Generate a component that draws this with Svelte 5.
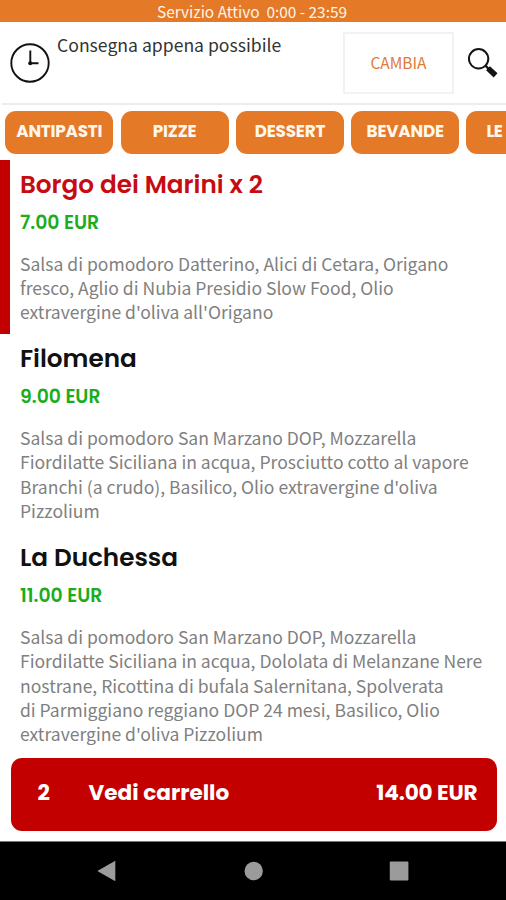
<script lang="ts">
	// Restaurant menu screen: category tabs, dish list and cart bar

	interface Dish {
		name: string;
		price: string;
		quantity: number;
		lines: string[];
	}

	const categories = ['ANTIPASTI', 'PIZZE', 'DESSERT', 'BEVANDE', 'LE'];

	const dishes: Dish[] = [
		{
			name: 'Borgo dei Marini',
			price: '7.00 EUR',
			quantity: 2,
			lines: [
				'Salsa di pomodoro Datterino, Alici di Cetara, Origano',
				'fresco, Aglio di Nubia Presidio Slow Food, Olio',
				"extravergine d'oliva all'Origano"
			]
		},
		{
			name: 'Filomena',
			price: '9.00 EUR',
			quantity: 0,
			lines: [
				'Salsa di pomodoro San Marzano DOP, Mozzarella',
				'Fiordilatte Siciliana in acqua, Prosciutto cotto al vapore',
				"Branchi (a crudo), Basilico, Olio extravergine d'oliva",
				'Pizzolium'
			]
		},
		{
			name: 'La Duchessa',
			price: '11.00 EUR',
			quantity: 0,
			lines: [
				'Salsa di pomodoro San Marzano DOP, Mozzarella',
				'Fiordilatte Siciliana in acqua, Dololata di Melanzane Nere',
				'nostrane, Ricottina di bufala Salernitana, Spolverata',
				'di Parmiggiano reggiano DOP 24 mesi, Basilico, Olio',
				"extravergine d'oliva Pizzolium"
			]
		}
	];
</script>

<div class="screen">
	<div class="service">Servizio Attivo&nbsp; 0:00 - 23:59</div>

	<header class="delivery">
		<svg class="clock" viewBox="0 0 40 40" fill="none" stroke="#111">
			<circle cx="20" cy="20" r="18.7" stroke-width="1.9" />
			<path d="M20.3 7.5v12.8M20 20.3h8.5" stroke-width="1.9" />
			<circle cx="20.2" cy="20.3" r="2" fill="#111" stroke="none" />
		</svg>
		<span class="when">Consegna appena possibile</span>
		<button class="change">CAMBIA</button>
		<svg class="search" viewBox="0 0 30 30" fill="none" stroke="#151515">
			<circle cx="10.6" cy="10.8" r="9.7" stroke-width="2" />
			<path d="M17.4 17.6l4 4" stroke-width="2.2" />
			<path d="M20 20.2l7.6 7.2" stroke-width="5.6" />
		</svg>
	</header>

	<nav class="tabs">
		{#each categories as category, index}
			<button class="tab" class:tab-partial={index === categories.length - 1}>{category}</button>
		{/each}
	</nav>

	<main class="menu">
		{#each dishes as dish}
			<article class="dish" class:selected={dish.quantity > 0}>
				<h2>{dish.name}{dish.quantity > 0 ? ` x ${dish.quantity}` : ''}</h2>
				<div class="price">{dish.price}</div>
				<div class="description">
					{#each dish.lines as line}
						<div>{line}</div>
					{/each}
				</div>
			</article>
		{/each}
	</main>

	<button class="cart">
		<span class="count">2</span>
		<span>Vedi carrello</span>
		<span class="total">14.00 EUR</span>
	</button>

	<footer class="system">
		<svg viewBox="0 0 20 22"><path d="M.3 11L18.3 .8v20.4z" fill="#9b9b9b" /></svg>
		<svg viewBox="0 0 20 22"><circle cx="10.7" cy="11" r="9.2" fill="#9b9b9b" /></svg>
		<svg viewBox="0 0 20 22"><rect x=".8" y="1.6" width="18.6" height="18.8" rx="1" fill="#9b9b9b" /></svg>
	</footer>
</div>

<style>
	:global(body) {
		margin: 0;
		background: #fff;
	}

	.screen {
		display: flex;
		flex-direction: column;
		width: 506px;
		height: 900px;
		overflow: hidden;
		background: #fff;
		font-family: 'Noto Sans CJK SC', 'Noto Sans', sans-serif;
	}

	button {
		border: 0;
		padding: 0;
		margin: 0;
		font-family: inherit;
	}

	.service {
		flex: none;
		height: 22px;
		line-height: 22px;
		padding-right: 2px;
		background: #e47927;
		color: #fff4e6;
		font-size: 15.4px;
		text-align: center;
		white-space: nowrap;
	}

	/* Delivery row */
	.delivery {
		flex: none;
		box-sizing: border-box;
		height: 83px;
		margin-left: 2px;
		padding: 10px 9px 0 8px;
		display: flex;
		align-items: flex-start;
		border-bottom: 2px solid #ececee;
	}

	.clock {
		width: 40px;
		height: 40px;
		margin-top: 11px;
	}

	.when {
		flex: 1;
		margin-left: 7px;
		line-height: 25px;
		font-size: 17.6px;
		color: #333;
		white-space: nowrap;
	}

	.change {
		box-sizing: border-box;
		width: 111px;
		height: 62px;
		padding-bottom: 2px;
		border: 2px solid #f2f2f2;
		background: #fff;
		color: #e07a38;
		font-size: 15.5px;
	}

	.search {
		width: 30px;
		height: 30px;
		margin: 16px -1px 0 14px;
	}

	/* Category tabs */
	.tabs {
		flex: none;
		display: flex;
		gap: 7.3px;
		height: 43px;
		padding: 6px 0 6px 5.3px;
		overflow: hidden;
	}

	.tab {
		flex: none;
		box-sizing: border-box;
		width: 108px;
		height: 43px;
		padding-bottom: 4px;
		border-radius: 11px;
		background: #e47927;
		color: #fff6ec;
		font-family: Poppins, Inter, sans-serif;
		font-weight: 700;
		font-size: 16.8px;
		letter-spacing: -0.2px;
		white-space: nowrap;
	}

	.tab-partial {
		padding-left: 20px;
		text-align: left;
		letter-spacing: -0.7px;
	}

	/* Dish list */
	.menu {
		flex: none;
		height: 597.5px;
		overflow: hidden;
	}

	.dish {
		padding: 8px 0 9.7px 10px;
		border-left: 10px solid transparent;
	}

	.selected {
		border-left-color: #c30000;
	}

	h2 {
		margin: 0;
		line-height: 33px;
		font-family: Poppins, Inter, sans-serif;
		font-weight: 600;
		font-size: 24.7px;
		color: #111;
	}

	.selected h2 {
		color: #c60c10;
	}

	.price {
		margin-top: 10px;
		line-height: 24px;
		font-family: Poppins, Inter, sans-serif;
		font-weight: 600;
		font-size: 18.8px;
		color: #1cac1c;
	}

	.description {
		margin-top: 16.7px;
		line-height: 24.35px;
		font-size: 17.55px;
		color: #808080;
		white-space: nowrap;
	}

	/* Cart bar */
	.cart {
		flex: none;
		display: flex;
		align-items: center;
		height: 73.5px;
		margin: 0 9.5px 10px 10.5px;
		padding: 0 19px 3px 27px;
		border-radius: 11px;
		background: #c30000;
		color: #fff;
		font-family: Poppins, Inter, sans-serif;
		font-weight: 700;
		font-size: 21.6px;
	}

	.count {
		width: 51px;
		text-align: left;
	}

	.total {
		margin-left: auto;
		letter-spacing: -0.15px;
	}

	/* Android navigation */
	.system {
		flex: 1;
		display: flex;
		justify-content: center;
		align-items: center;
		gap: 126px;
		border-top: 1px solid #777;
		background: #000;
	}

	.system svg {
		width: 20px;
		height: 22px;
	}
</style>
